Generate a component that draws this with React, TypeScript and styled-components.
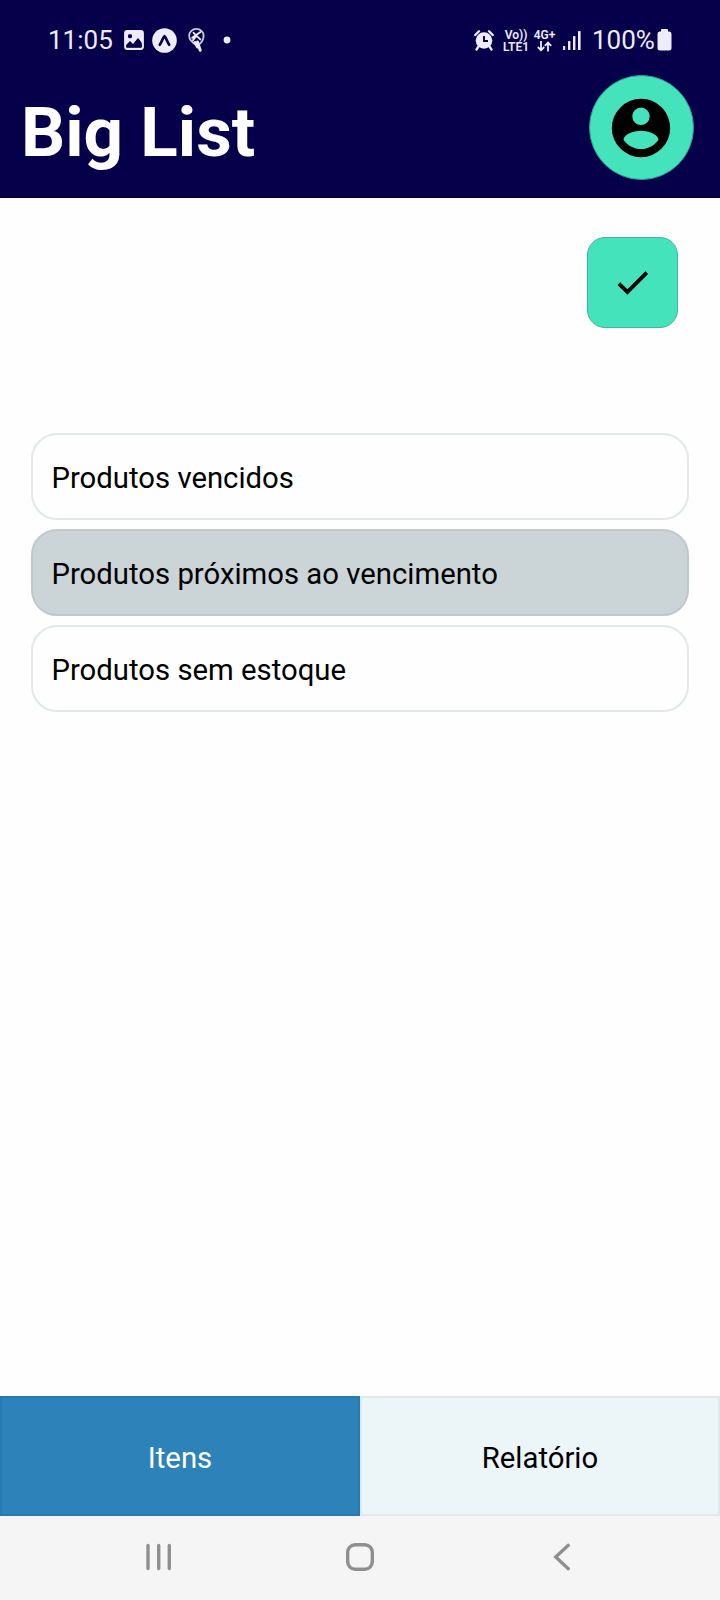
import React, { useState } from 'react';
import styled, { createGlobalStyle } from 'styled-components';

const GlobalStyle = createGlobalStyle`
  *, *::before, *::after { box-sizing: border-box; }
  body { margin: 0; background: #fefefe; }
  button { font: inherit; color: inherit; padding: 0; margin: 0; cursor: pointer; }
  svg { display: block; flex: none; }
`;

const Screen = styled.div`
  width: 720px;
  height: 1600px;
  display: flex;
  flex-direction: column;
  overflow: hidden;
  background: #fefefe;
  color: #000;
  font-family: Roboto, 'Liberation Sans', sans-serif;
`;

const Header = styled.header`
  height: 198px;
  flex: none;
  background: #06004a;
  border-bottom: 1px solid #02002a;
  color: #fff;
`;

const StatusBar = styled.div`
  height: 75px;
  padding: 5px 48px 0 48px;
  display: flex;
  justify-content: space-between;
  align-items: center;
  color: #eeebfa;
`;

const StatusGroup = styled.div`
  display: flex;
  align-items: center;
`;

const StatusText = styled.span<{ $width: number }>`
  width: ${({ $width }) => $width}px;
  font-size: 26px;
  line-height: 30px;
  white-space: nowrap;
`;

const Slot = styled.span<{ $gap: number }>`
  display: flex;
  margin-left: ${({ $gap }) => $gap}px;
`;

const Network = styled.span<{ $gap: number; $width: number }>`
  display: flex;
  flex-direction: column;
  align-items: center;
  width: ${({ $width }) => $width}px;
  margin-left: ${({ $gap }) => $gap}px;
  padding-top: 1px;
  font-size: 12px;
  line-height: 12px;
  font-weight: 600;
  white-space: nowrap;
`;

const TitleBar = styled.div`
  display: flex;
  justify-content: space-between;
  align-items: flex-start;
  padding: 0 26px 0 21px;
`;

const Title = styled.h1`
  margin: 17px 0 0;
  font-size: 69.3px;
  line-height: 82px;
  font-weight: 700;
`;

const Avatar = styled.button`
  width: 105px;
  height: 105px;
  display: flex;
  align-items: center;
  justify-content: center;
  padding-right: 1px;
  border: 1px solid #2b9c93;
  border-radius: 50%;
  background: #44e3bb;
  color: #000;
`;

const Main = styled.main`
  flex: 1;
  padding: 39px 31px 0;
  display: flex;
  flex-direction: column;
`;

const ConfirmButton = styled.button`
  align-self: flex-end;
  width: 91px;
  height: 91px;
  margin-right: 11px;
  padding-right: 1px;
  display: flex;
  align-items: center;
  justify-content: center;
  border: 1px solid #3cb79c;
  border-radius: 18px;
  background: #44e3bb;
`;

const ReportList = styled.div`
  margin-top: 105px;
  display: flex;
  flex-direction: column;
  gap: 9px;
`;

const ReportItem = styled.button<{ $selected: boolean }>`
  height: 87px;
  padding: 2px 0 0 18.5px;
  border: 2px solid ${({ $selected }) => ($selected ? '#bfc9cc' : '#e3e9e9')};
  border-radius: 26px;
  background: ${({ $selected }) => ($selected ? '#cbd4d7' : '#fefefe')};
  font-size: 29.3px;
  line-height: 34px;
  text-align: left;
`;

const Tabs = styled.nav`
  height: 120px;
  flex: none;
  display: grid;
  grid-template-columns: 1fr 1fr;
`;

const Tab = styled.button<{ $active: boolean }>`
  padding-top: 3px;
  border: 2px solid ${({ $active }) => ($active ? '#277ab0' : '#e0eaed')};
  background: ${({ $active }) => ($active ? '#2d82b9' : '#ecf6f9')};
  color: ${({ $active }) => ($active ? '#fff' : '#000')};
  font-size: 29.3px;
  line-height: 34px;
`;

const SystemNav = styled.div`
  height: 84px;
  flex: none;
  display: grid;
  grid-template-columns: 29px 28px 18px;
  align-items: center;
  justify-content: space-between;
  padding: 0 149px 2px 144px;
  background: #f5f5f5;
  color: #8f8f8f;
`;

const HomeSlot = styled.span`
  display: block;
  margin-left: -3px;
`;

const ImageIcon = () => (
  <svg width="20" height="20" viewBox="0 0 20 20">
    <rect x="1.2" y="1.2" width="17.6" height="17.6" rx="2" fill="none" stroke="currentColor" strokeWidth="2.2" />
    <path d="M1 1h18v13l-5-6-5 6-3-3-5 5z" fill="currentColor" />
    <rect x="4" y="4.2" width="4" height="4" rx="1.4" fill="#06004a" />
    <path d="M2.2 15.8 6 11.8l3.2 3.5 4.6-6.1 4 5.5v2.6H2.2z" fill="#06004a" />
  </svg>
);

const ExpoIcon = () => (
  <svg width="25" height="25" viewBox="0 0 25 25">
    <circle cx="12.5" cy="12.5" r="12.3" fill="currentColor" />
    <path d="M7.8 16.8c1.9-2.5 2.9-7 4.7-8.600 1.800 1.600 2.800 6.100 4.700 8.600" fill="none" stroke="#06004a" strokeWidth="2.7" strokeLinecap="round" strokeLinejoin="round" />
  </svg>
);

const BadgeIcon = () => (
  <svg width="17" height="24" viewBox="0 0 17 24" fill="none" stroke="currentColor" strokeLinecap="round">
    <path d="M8.500 17C4 14.500 1 11 1.200 7.600a7.200 6.700 0 0 1 14.400 0c0 3.400-1.700 6.600-4.100 8.500" strokeWidth="1.800" opacity=".85" />
    <path d="M4.200 9.800 12.500 4M5.600 4.800l2.700 2.800 4 3.800M8.300 7.600 5 12.300" strokeWidth="1.900" />
    <path d="m7 14.500 2.500 4.500M9.500 14l2.700 8.300" strokeWidth="2.900" />
  </svg>
);

const AlarmIcon = () => (
  <svg width="20" height="21" viewBox="0 0 20 21">
    <circle cx="10" cy="10.5" r="8.3" fill="currentColor" />
    <path d="M1.200 5 5 1.300M18.800 5 15 1.300M4.500 16.500l-2 3M15.500 16.500l2 3" stroke="currentColor" strokeWidth="2.300" strokeLinecap="round" />
    <path d="M10 6v5h4" fill="none" stroke="#06004a" strokeWidth="1.900" />
  </svg>
);

const DataArrows = () => (
  <svg width="15" height="11" viewBox="0 0 15 11" fill="none" stroke="currentColor" strokeWidth="1.800">
    <path d="M4 0v9M.8 6 4 9.300 7.200 6M11 10.500V1.500M7.800 4.800 11 1.500l3.200 3.300" />
  </svg>
);

const SignalIcon = () => (
  <svg width="20" height="21" viewBox="0 0 20 21" fill="currentColor">
    <rect x="1" y="16" width="2.2" height="4" rx=".6" />
    <rect x="6" y="11" width="2.4" height="9" rx=".6" />
    <rect x="11" y="6" width="2.4" height="14" rx=".6" />
    <rect x="16" y="1" width="2.6" height="19" rx=".6" />
  </svg>
);

const BatteryIcon = () => (
  <svg width="15" height="22" viewBox="0 0 15 22" fill="currentColor">
    <path d="M5 0h5q1 0 1 1v1.500h1.500Q14.500 2.500 14.500 5v14q0 2.500-2.500 2.500H3Q.5 21.500.5 19V5q0-2.500 2-2.500H4V1q0-1 1-1z" />
  </svg>
);

const AccountIcon = () => (
  <svg width="70" height="70" viewBox="0 0 24 24" fill="currentColor">
    <path d="M12,19.2C9.5,19.2 7.29,17.92 6,16C6.03,14 10,12.9 12,12.9C14,12.9 17.97,14 18,16C16.71,17.92 14.5,19.2 12,19.2M12,5A3,3 0 0,1 15,8A3,3 0 0,1 12,11A3,3 0 0,1 9,8A3,3 0 0,1 12,5M12,2A10,10 0 0,0 2,12A10,10 0 0,0 12,22A10,10 0 0,0 22,12C22,6.47 17.5,2 12,2Z" />
  </svg>
);

const CheckIcon = () => (
  <svg width="41" height="41" viewBox="0 0 24 24" fill="currentColor" stroke="currentColor" strokeWidth=".25">
    <path d="M9 16.170 4.830 12l-1.420 1.410L9 19 21 7l-1.410-1.410z" />
  </svg>
);

const RecentsIcon = () => (
  <svg width="29" height="28" viewBox="0 0 29 28" stroke="currentColor" strokeWidth="3.400" strokeLinecap="round">
    <path d="M4 2.500v23M14.700 2.500v23M25.300 2.500v23" />
  </svg>
);

const HomeIcon = () => (
  <svg width="28" height="28" viewBox="0 0 28 28" fill="none" stroke="currentColor" strokeWidth="3.400">
    <rect x="1.7" y="1.7" width="24.6" height="24.6" rx="7.5" />
  </svg>
);

const BackIcon = () => (
  <svg width="18" height="28" viewBox="0 0 18 28" fill="none" stroke="currentColor" strokeWidth="3.300" strokeLinecap="round">
    <path d="M15.300 2.300 2.700 14l12.600 11.700" />
  </svg>
);

const reports = ['Produtos vencidos', 'Produtos próximos ao vencimento', 'Produtos sem estoque'];
const tabs = ['Itens', 'Relatório'];

export default function App() {
  const [selected, setSelected] = useState(1);
  const [tab, setTab] = useState(0);

  return (
    <>
      <GlobalStyle />
      <Screen>
        <Header>
          <StatusBar>
            <StatusGroup>
              <StatusText $width={65}>11:05</StatusText>
              <Slot $gap={11}><ImageIcon /></Slot>
              <Slot $gap={8}><ExpoIcon /></Slot>
              <Slot $gap={11}><BadgeIcon /></Slot>
              <Slot $gap={18}>
                <svg width="8" height="8"><circle cx="4" cy="4" r="3.4" fill="currentColor" /></svg>
              </Slot>
            </StatusGroup>
            <StatusGroup>
              <Slot $gap={0}><AlarmIcon /></Slot>
              <Network $gap={9} $width={26}><span>Vo))</span><span>LTE1</span></Network>
              <Network $gap={5} $width={21}><span>4G+</span><DataArrows /></Network>
              <Slot $gap={7}><SignalIcon /></Slot>
              <Slot $gap={10}><StatusText $width={63}>100%</StatusText></Slot>
              <Slot $gap={2}><BatteryIcon /></Slot>
            </StatusGroup>
          </StatusBar>
          <TitleBar>
            <Title>Big List</Title>
            <Avatar aria-label="Conta"><AccountIcon /></Avatar>
          </TitleBar>
        </Header>
        <Main>
          <ConfirmButton aria-label="Confirmar"><CheckIcon /></ConfirmButton>
          <ReportList>
            {reports.map((label, i) => (
              <ReportItem key={label} $selected={i === selected} onClick={() => setSelected(i)}>
                {label}
              </ReportItem>
            ))}
          </ReportList>
        </Main>
        <Tabs>
          {tabs.map((label, i) => (
            <Tab key={label} $active={i === tab} onClick={() => setTab(i)}>{label}</Tab>
          ))}
        </Tabs>
        <SystemNav>
          <RecentsIcon />
          <HomeSlot><HomeIcon /></HomeSlot>
          <BackIcon />
        </SystemNav>
      </Screen>
    </>
  );
}
